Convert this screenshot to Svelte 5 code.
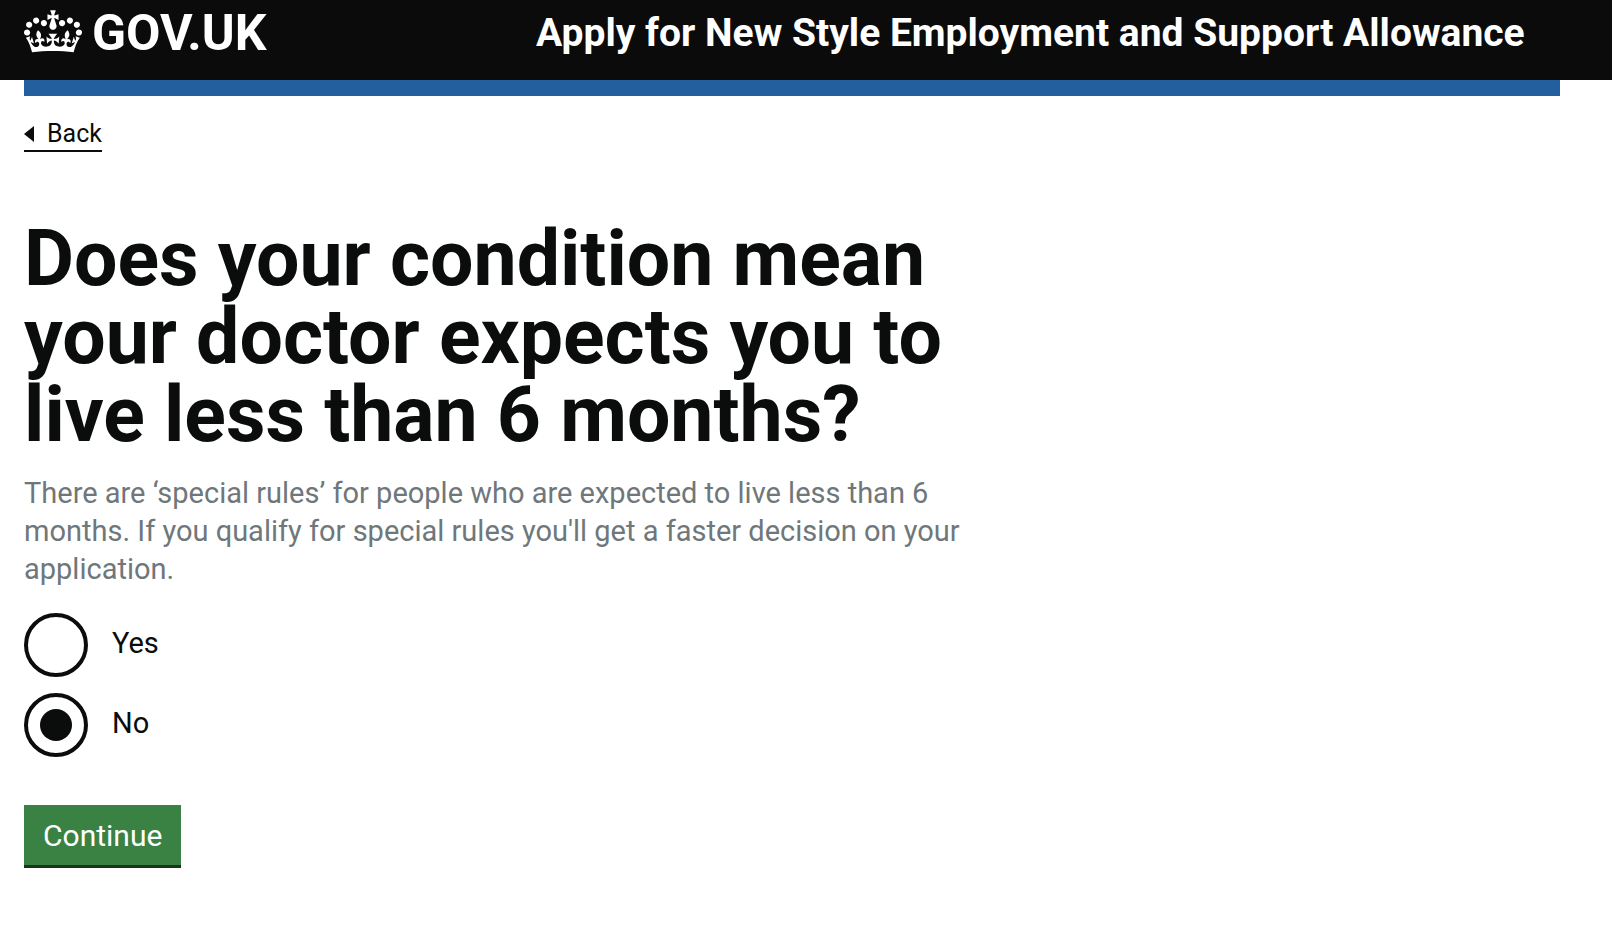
<script>
  let answer = $state('no');
  const options = [
    { value: 'yes', label: 'Yes' },
    { value: 'no', label: 'No' }
  ];
</script>

<header class="header">
  <div class="header-inner">
    <a class="logo" href="#home">
      <svg class="crown" viewBox="0 0 132 97" aria-hidden="true">
        <path fill="currentColor" fill-rule="evenodd" d="M25 30.2c3.5 1.5 7.7-.2 9.1-3.7 1.5-3.6-.2-7.8-3.9-9.2-3.6-1.4-7.6.3-9.1 3.9-1.4 3.5.3 7.5 3.9 9zM9 39.5c3.6 1.5 7.8-.2 9.2-3.7 1.5-3.6-.2-7.8-3.9-9.1-3.6-1.5-7.6.2-9.1 3.8-1.4 3.5.3 7.5 3.8 9zM4.4 57.2c3.5 1.5 7.7-.2 9.1-3.8 1.5-3.6-.2-7.7-3.9-9.1-3.5-1.5-7.6.3-9.1 3.8-1.4 3.5.3 7.6 3.9 9.1zm38.3-21.4c3.5 1.5 7.7-.2 9.1-3.8 1.5-3.6-.2-7.7-3.9-9.1-3.6-1.5-7.6.3-9.1 3.8-1.3 3.6.4 7.7 3.9 9.1zm64.4-5.6c-3.6 1.5-7.8-.2-9.1-3.7-1.5-3.6.2-7.8 3.8-9.2 3.6-1.4 7.7.3 9.2 3.9 1.3 3.5-.4 7.5-3.9 9zm15.9 9.3c-3.6 1.5-7.7-.2-9.1-3.7-1.5-3.6.2-7.8 3.7-9.1 3.6-1.5 7.7.2 9.2 3.8 1.5 3.5-.3 7.5-3.8 9zm4.7 17.7c-3.6 1.5-7.8-.2-9.2-3.8-1.5-3.6.2-7.7 3.9-9.1 3.6-1.5 7.7.3 9.2 3.8 1.3 3.5-.4 7.6-3.9 9.1zM89.3 35.8c-3.6 1.5-7.8-.2-9.2-3.8-1.4-3.6.2-7.7 3.9-9.1 3.6-1.5 7.7.3 9.2 3.8 1.4 3.6-.3 7.7-3.9 9.1zM69.7 17.7l8.9 4.7V9.3l-8.9 2.8c-.2-.3-.5-.6-.9-.9L72.4 0H59.6l3.5 11.2c-.3.3-.6.5-.9.9l-8.8-2.8v13.1l8.8-4.7c.3.3.6.7.9.9l-5 15.4v.1c-.2.8-.4 1.6-.4 2.4 0 4.1 3.1 7.5 7 8.1h.2c.3 0 .7.1 1 .1.4 0 .7 0 1-.1h.2c4-.6 7.1-4.1 7.1-8.1 0-.8-.1-1.7-.4-2.4V34l-5.1-15.4c.4-.2.7-.6 1-.9zM66 92.8c16.9 0 32.8 1.1 47.1 3.2 4-16.9 8.9-26.7 14-33.5l-9.6-3.4c1 4.9 1.1 7.2 0 10.2-1.5-1.4-3-4.3-4.2-8.7L108.6 76c2.8-2 5-3.2 7.5-3.3-4.4 9.4-10 11.9-13.6 11.2-4.3-.8-6.3-4.6-5.6-7.9 1-4.7 5.7-5.9 8-.5 4.3-8.7-3-11.4-7.6-8.8 7.1-7.2 7.9-13.5 2.1-21.1-8 6.1-8.1 12.3-4.5 20.8-4.7-5.4-12.1-2.5-9.5 6.2 3.4-5.2 7.9-2 7.2 3.1-.6 4.3-6.4 7.8-13.5 7.2-10.3-.9-10.9-8-11.2-13.8 2.5-.5 7.1 1.8 11 7.3L80.2 60c-4.1 4.4-8 5.3-12.3 5.4 1.4-4.4 8-11.6 8-11.6H55.5s6.4 7.2 7.9 11.6c-4.2-.1-8-1-12.3-5.4l1.4 16.4c3.9-5.5 8.5-7.7 10.9-7.3-.3 5.8-.9 12.8-11.1 13.8-7.2.6-12.9-2.9-13.5-7.2-.7-5 3.8-8.3 7.1-3.1 2.7-8.7-4.6-11.6-9.4-6.2 3.7-8.5 3.6-14.7-4.6-20.8-5.8 7.6-5 13.9 2.2 21.1-4.7-2.6-11.9.1-7.7 8.8 2.3-5.5 7.1-4.2 8.1.5.7 3.3-1.3 7.1-5.7 7.9-3.5.7-9-1.8-13.5-11.2 2.5.1 4.7 1.3 7.5 3.3l-4.7-15.4c-1.2 4.4-2.7 7.2-4.3 8.7-1.1-3-.9-5.3 0-10.2l-9.5 3.4c5 6.9 9.9 16.7 14 33.5 14.8-2.1 30.8-3.2 47.7-3.2z" />
      </svg>
      <span class="logo-text">GOV.UK</span>
    </a>
    <a class="service" href="#service">Apply for New Style Employment and Support Allowance</a>
  </div>
</header>

<div class="container">
  <div class="bar"></div>
  <a class="back" href="#back">
    <svg class="arrow" viewBox="0 0 10 16" aria-hidden="true"><path d="M0 8 10 0v16z" fill="currentColor" /></svg>
    Back
  </a>
  <main>
    <form onsubmit={(e) => e.preventDefault()}>
      <fieldset aria-describedby="hint">
        <legend><h1>Does your condition mean your doctor expects you to live less than 6 months?</h1></legend>
        <p class="hint" id="hint">
          There are ‘special rules’ for people who are expected to live less than 6 months. If you qualify for special rules you'll get a faster decision on your application.
        </p>
        <div class="radios">
          {#each options as option}
            <div class="radio">
              <input type="radio" name="answer" id={option.value} value={option.value} bind:group={answer} />
              <label for={option.value}>{option.label}</label>
            </div>
          {/each}
        </div>
      </fieldset>
      <button type="submit">Continue</button>
    </form>
  </main>
</div>

<style>
  :global(body) {
    margin: 0;
    background: #fff;
    color: #0b0c0c;
    font-family: Roboto, 'Liberation Sans', sans-serif;
  }

  .header {
    background: #0b0b0b;
    color: #fff;
  }

  .header-inner {
    display: grid;
    grid-template-columns: 1fr 2fr;
    box-sizing: border-box;
    min-height: 80px;
    padding: 10px 52px 0 24px;
  }

  .logo {
    display: flex;
    align-items: flex-start;
    gap: 10px;
    color: inherit;
    text-decoration: none;
  }

  .crown {
    display: block;
    width: 58px;
    height: 43px;
  }

  .logo-text {
    font-size: 50px;
    line-height: 46px;
    font-weight: 700;
  }

  .service {
    color: inherit;
    font-size: 39px;
    line-height: 46px;
    font-weight: 700;
    text-decoration: none;
  }

  .container {
    padding: 0 52px 0 24px;
  }

  .bar {
    height: 16px;
    background: #235f9f;
  }

  .back {
    display: inline-flex;
    align-items: center;
    gap: 13px;
    margin-top: 22px;
    border-bottom: 2px solid #0b0c0c;
    color: inherit;
    font-size: 25px;
    line-height: 32px;
    text-decoration: none;
  }

  .arrow {
    width: 10px;
    height: 16px;
  }

  main {
    max-width: 960px;
    padding-top: 68px;
  }

  fieldset {
    min-width: 0;
    margin: 0;
    padding: 0;
    border: 0;
  }

  legend {
    padding: 0;
  }

  h1 {
    margin: 0;
    font-size: 77px;
    line-height: 78px;
    font-weight: 700;
  }

  .hint {
    margin: 20px 0 25px;
    color: #6f777b;
    font-size: 29px;
    line-height: 38px;
  }

  .radios {
    display: grid;
    gap: 16px;
  }

  .radio {
    display: flex;
    align-items: center;
    gap: 24px;
  }

  .radio input {
    appearance: none;
    box-sizing: border-box;
    width: 64px;
    height: 64px;
    margin: 0;
    border: 4px solid #0b0c0c;
    border-radius: 50%;
    background: #fff;
  }

  .radio input:checked {
    background: #0b0c0c;
    background-clip: content-box;
    padding: 12px;
  }

  label {
    padding-bottom: 4px;
    font-size: 29px;
    line-height: 38px;
  }

  button {
    display: block;
    margin: 48px 0 0;
    padding: 12px 19px 10px;
    border: 0;
    border-bottom: 3px solid #17361c;
    border-radius: 0;
    background: #3a8244;
    color: #fff;
    font: inherit;
    font-size: 30px;
    line-height: 38px;
  }
</style>
